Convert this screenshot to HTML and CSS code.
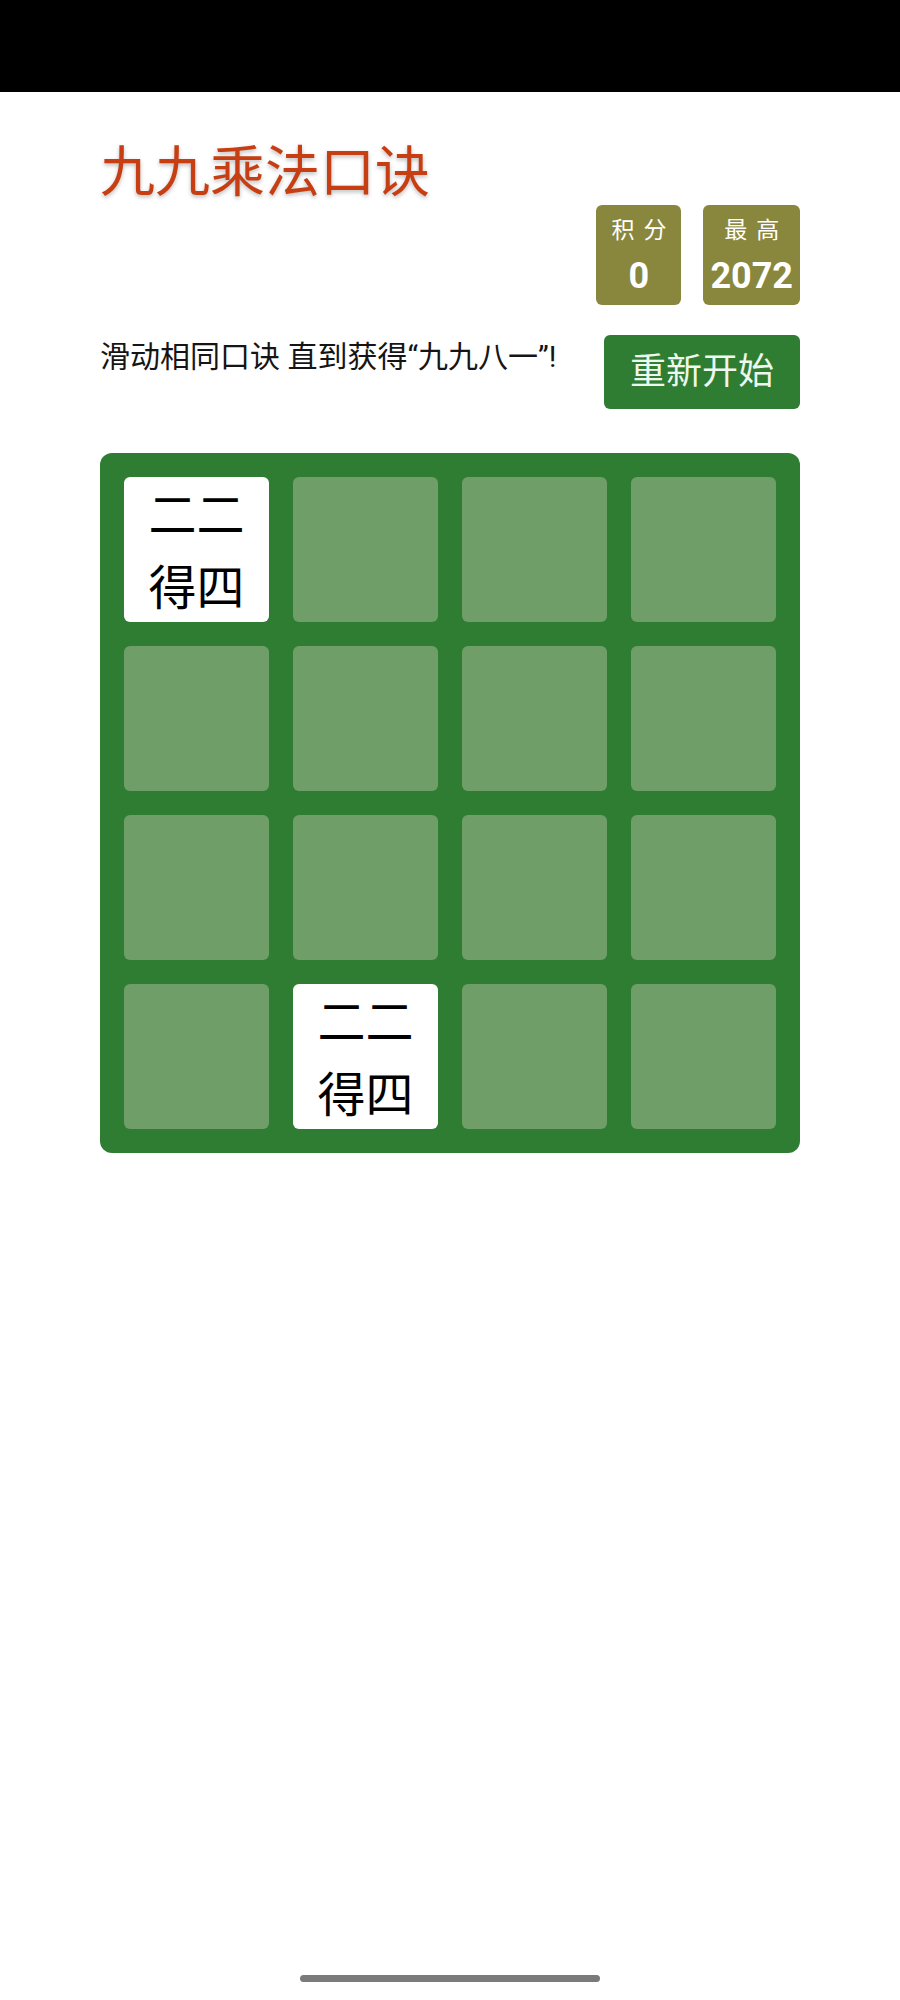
FILE: index.html
```html
<!DOCTYPE html>
<html lang="zh-CN">
<head>
<meta charset="utf-8">
<title>九九乘法口诀</title>
<link rel="stylesheet" href="styles.css">
</head>
<body>
<div class="statusbar"></div>
<main class="container">
  <h1 class="title">九九乘法口诀</h1>
  <div class="scores">
    <div class="score-box score-current">
      <div class="score-label">积分</div>
      <div class="score-value">0</div>
    </div>
    <div class="score-box score-best">
      <div class="score-label">最高</div>
      <div class="score-value">2072</div>
    </div>
  </div>
  <div class="intro-row">
    <p class="intro">滑动相同口诀 直到获得“九九八一”!</p>
    <button class="restart">重新开始</button>
  </div>
  <div class="board">
    <div class="cell tile"><span>二二</span><span>得四</span></div>
    <div class="cell"></div>
    <div class="cell"></div>
    <div class="cell"></div>
    <div class="cell"></div>
    <div class="cell"></div>
    <div class="cell"></div>
    <div class="cell"></div>
    <div class="cell"></div>
    <div class="cell"></div>
    <div class="cell"></div>
    <div class="cell"></div>
    <div class="cell"></div>
    <div class="cell tile"><span>二二</span><span>得四</span></div>
    <div class="cell"></div>
    <div class="cell"></div>
  </div>
</main>
<div class="home-indicator"></div>
</body>
</html>
```

FILE: styles.css
```css
html, body {
  margin: 0;
  padding: 0;
  background: #ffffff;
}

body {
  position: relative;
  min-height: 2000px;
  font-family: Roboto, "Noto Sans CJK SC", sans-serif;
  color: #111;
}

.statusbar {
  height: 92px;
  background: #000;
}

.container {
  width: 700px;
  margin: 0 auto;
}

.title {
  margin: 50px 0 0 0;
  font-size: 55px;
  line-height: 61px;
  font-weight: normal;
  color: #c63e12;
  text-shadow: 0 2px 4px rgba(0, 0, 0, 0.28);
  letter-spacing: 0;
}

.scores {
  display: flex;
  justify-content: flex-end;
  gap: 22px;
  margin-top: 2px;
}

.score-box {
  box-sizing: border-box;
  height: 100px;
  min-width: 85px;
  padding: 0 7px;
  background: #89873d;
  border-radius: 6px;
  color: #fff;
  text-align: center;
}

.score-label {
  margin-top: 12px;
  font-size: 23px;
  line-height: 28px;
  letter-spacing: 9px;
  margin-right: -9px;
}

.score-value {
  margin-top: 11px;
  font-size: 36px;
  line-height: 40px;
  font-weight: bold;
}

.intro-row {
  display: flex;
  justify-content: space-between;
  align-items: flex-start;
  margin-top: 30px;
}

.intro {
  margin: 0;
  font-size: 30px;
  line-height: 43px;
  color: #151515;
}

.restart {
  width: 196px;
  height: 74px;
  padding: 0;
  border: none;
  border-radius: 6px;
  background: #2e7d32;
  color: #eef7ee;
  font-family: Roboto, "Noto Sans CJK SC", sans-serif;
  font-size: 36px;
  line-height: 74px;
}

.board {
  margin-top: 44px;
  box-sizing: border-box;
  width: 700px;
  height: 700px;
  padding: 24px;
  background: #2e7d32;
  border-radius: 12px;
  display: grid;
  grid-template-columns: repeat(4, 145px);
  grid-template-rows: repeat(4, 145px);
  gap: 24px;
}

.cell {
  background: #6f9e69;
  border-radius: 6px;
}

.cell.tile {
  box-sizing: border-box;
  padding-top: 5px;
  background: #fff;
  display: flex;
  flex-direction: column;
  align-items: center;
  justify-content: center;
  font-size: 48px;
  line-height: 73px;
  color: #000;
}

.home-indicator {
  position: absolute;
  left: 300px;
  top: 1975px;
  width: 300px;
  height: 7px;
  border-radius: 4px;
  background: #7a7a7a;
}
```
